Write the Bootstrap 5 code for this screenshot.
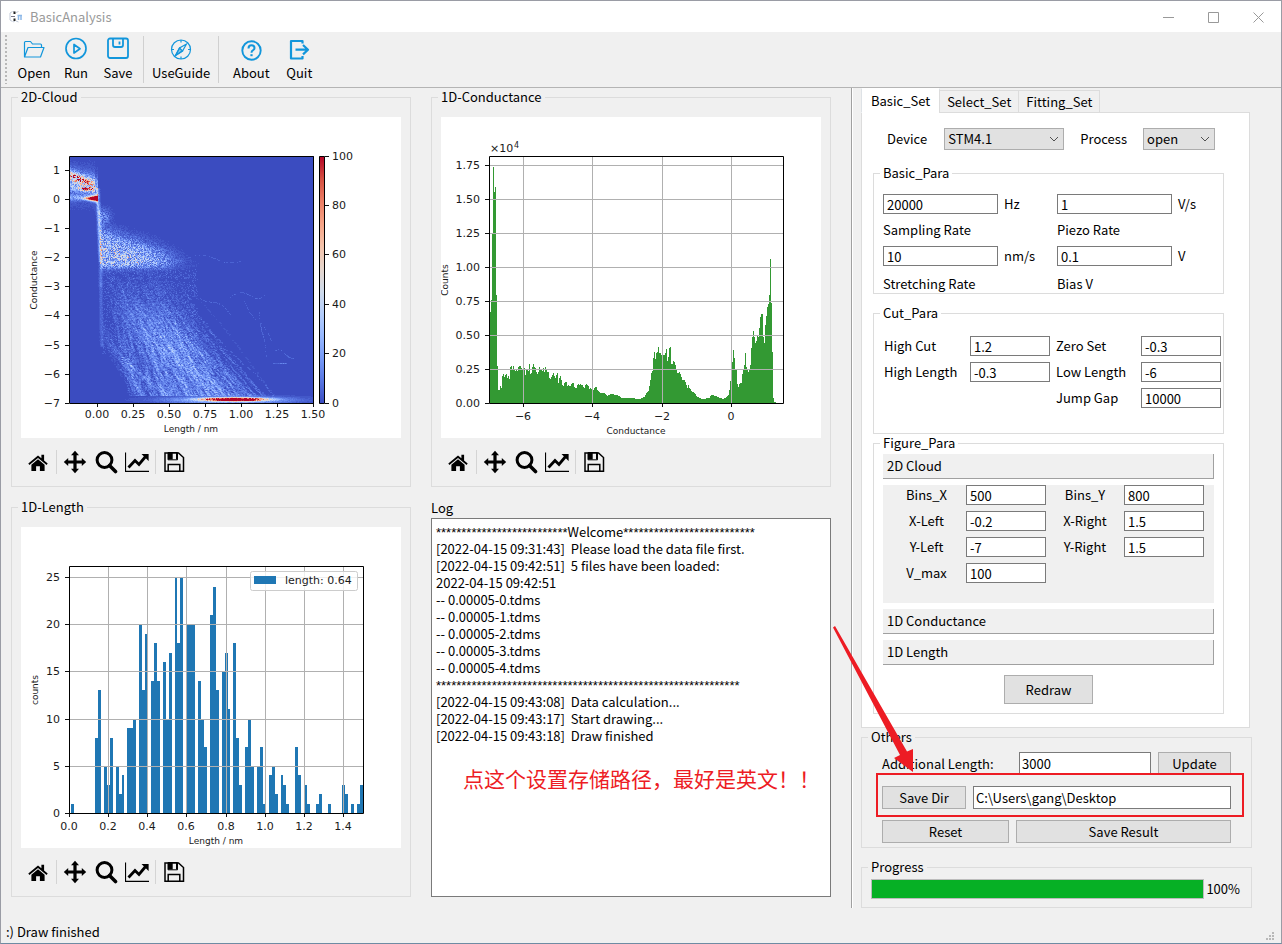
<!DOCTYPE html>
<html lang="en">
<head>
<meta charset="utf-8">
<meta name="viewport" content="width=device-width, initial-scale=1">
<title>BasicAnalysis</title>
<link rel="stylesheet" href="https://cdn.jsdelivr.net/npm/bootstrap@5.3.0/dist/css/bootstrap.min.css">
<style>
  body { font-family: "Noto Sans CJK SC", "Noto Sans", sans-serif; font-size: 13px; line-height: 18px; color: #000; background: #f0f0f0; }
  .app-window { min-height: 100vh; border: 1px solid #9a9ca5; border-bottom-color: #6e8ba3; background: #f0f0f0; }
  .title-bar { height: 31px; background: #fff; color: #999; }
  .win-btn { width: 45px; height: 30px; border: 0; background: none; color: #999; }
  .tool-bar { height: 56px; border-bottom: 1px solid #b4b4b4; }
  .handle { width: 2px; height: 49px; margin-right: 2px; background: repeating-linear-gradient(#b8b8b8 0 2px, transparent 2px 4px); }
  .tool-btn { min-width: 42px; border: 0; background: none; padding: 0; display: flex; flex-direction: column; align-items: center; gap: 3px; color: #000; line-height: 18px; }
  .tool-btn svg { color: #1296db; }
  .tool-pair { gap: 6px; padding-left: 11px; }
  .rule { width: 1px; height: 47px; background: #d0d0d0; }
  .rule-sm { width: 1px; height: 24px; margin: 0 -1px; background: #d4d4d4; }

  .group-box { border: 1px solid #dcdcdc; padding: 0 9px; }
  .group-box > legend { float: none; width: auto; margin: 0 0 0 -3px; padding: 0 3px; font-size: 13px; line-height: 18px; }
  .work-area { padding: 0 20px 0 10px; }
  .plots { display: grid; grid-template-columns: minmax(0, 1fr) minmax(0, 1fr); gap: 11px 20px; }
  .figure-box { padding-top: 11px; }
  .figure-box svg.fig { display: block; width: 100%; height: auto; background: #fff; }
  .fig text { font-family: "DejaVu Sans", sans-serif; font-size: 11px; fill: #1a1a1a; }
  .fig .axis-name { font-size: 9px; }
  .fig .exponent { font-size: 8px; }
  .fig-tools { height: 48px; padding-left: 5px; gap: 7px; }
  .fig-tools button { border: 0; padding: 0; background: none; width: 24px; height: 24px; line-height: 0; color: #000; }

  .log-title { line-height: 20px; }
  .log-box { background: #fff; border: 1px solid #7a7a7a; padding: 4px; line-height: 17px; white-space: pre-wrap; }
  .stars { font-family: "Liberation Sans", sans-serif; line-height: 1; }
  .note { position: absolute; left: 31px; top: 244px; font-size: 21px; line-height: 30px; color: #ed1c24; white-space: nowrap; pointer-events: none; }

  .side { flex: 0 0 430px; border-left: 1px solid #a0a0a0; padding: 0 29px 0 9px; box-shadow: inset 1px 0 #fff; }
  .set-tabs { border: 0; align-items: flex-end; height: 24px; }
  .set-tabs .nav-link { border: 1px solid #dcdcdc; border-radius: 0; background: #f0f0f0; color: #000; padding: 2px 7px 1px; height: 23px; margin-bottom: -1px; margin-left: -1px; line-height: 18px; }
  .set-tabs .nav-link.active { background: #fff; color: #000; height: 25px; border-bottom-color: #fff; border-top-color: #fff; padding: 3px 9px 2px; margin-left: 0; }
  .set-tabs .nav-link:hover, .set-tabs .nav-link:focus { border-color: #dcdcdc; }
  .set-pane { background: #fff; border: 1px solid #dcdcdc; margin-right: 2px; padding: 15px 25px 13px 11px; }
  .field { height: 20px; border: 1px solid #7a7a7a; border-radius: 0; padding: 0 3px; font-size: 13px; line-height: 18px; color: #000; background: #fff; min-width: 0; }
  .field-tall { height: 23px; padding: 0 2px; }
  .pick { height: 22px; border: 1px solid #adadad; border-radius: 0; padding: 0 20px 0 3px; font-size: 13px; line-height: 20px; color: #000; background-color: #e1e1e1; background-position: right 4px center; background-size: 10px 10px;
    background-image: url("data:image/svg+xml,%3csvg xmlns='http://www.w3.org/2000/svg' viewBox='0 0 10 10'%3e%3cpath fill='none' stroke='%23505050' d='M1 3l4 4 4-4'/%3e%3c/svg%3e"); }
  .pick-device { width: 120px; }
  .pick-process { width: 72px; }
  .push { height: 23px; border: 1px solid #adadad; border-radius: 0; background: #e1e1e1; color: #000; padding: 0 6px; font-size: 13px; line-height: 20px; }
  .push-redraw { width: 89px; height: 29px; margin: 4px 0 9px; }
  .device-row { padding: 0 9px 0 14px; height: 22px; margin-bottom: 14px; }
  .basic-grid { display: grid; grid-template-columns: 115px 47px 115px 1fr; grid-template-rows: 20px 32px 20px 27px; column-gap: 6px; align-items: center; padding-top: 12px; }
  .basic-grid .last-label { align-self: end; }
  .cut-group { margin-top: 10px; padding-right: 0; }
  .cut-grid { display: grid; grid-template-columns: 80px 80px 79px 80px; gap: 6px; align-items: center; padding: 14px 0 25px 1px; }
  .folds { padding-top: 2px; }
  .cloud-grid { display: grid; grid-template-columns: 77px 80px 66px 80px; gap: 6px; align-items: center; text-align: center; background: #f0f0f0; padding-bottom: 20px; margin: 6px 0; }
  .cloud-grid label:nth-of-type(odd) { padding-left: 10px; }
  .fold { height: 25px; border: 0; border-right: 1px solid #a0a0a0; border-bottom: 1px solid #a0a0a0; background: #f0f0f0; text-align: left; padding: 0 4px; color: #000; }
  .fold-closed { margin-bottom: 6px; }
  .others { padding: 6px 20px 4px; }
  .others > legend { margin-left: -14px; }
  .others-rows { row-gap: 11px; }
  .others-row { gap: 7px; }
  .len-field { width: 132px; }
  .btn-update { width: 73px; }
  .btn-dir { width: 84px; }
  .btn-reset { width: 127px; }
  .progress-group { margin-top: 10px; padding: 3px 9px 8px; }
  .done { height: 20px; border: 1px solid #bcbcbc; border-radius: 0; background: #e6e6e6; }
  .done .progress-bar { background: #06b025; }
  .percent { padding: 0 2px; }
  .highlight { position: absolute; left: -6px; right: -13px; top: -13px; bottom: -8px; border: 2px solid #ed1c24; pointer-events: none; }
  .pointer { position: absolute; left: -49px; top: -160px; pointer-events: none; }
  .status-bar { height: 22px; padding: 0 5px; }
</style>
</head>
<body>
<svg class="d-none" aria-hidden="true">
  <symbol id="i-home" viewBox="0 0 24 24"><path d="M12 5.500L2.300 13.600l1.100 1.300L12 7.900l8.600 7 1.100-1.300-3.600-3V4.700h-2.700v3.600z"/><path d="M12 9.300l-6.600 5.400V21h4.700v-4.800h3.800V21h4.700v-6.300z"/></symbol>
  <symbol id="i-pan" viewBox="0 0 24 24"><path d="M12 .800l4 4.400h-2.400v5.200h5.200V8l4.400 4-4.400 4v-2.400h-5.200v5.200H16l-4 4.400-4-4.400h2.400v-5.200H5.200V16L.800 12l4.400-4v2.400h5.200V5.200H8z"/></symbol>
  <symbol id="i-zoom" viewBox="0 0 24 24"><circle cx="10.500" cy="10" r="7.400" fill="none" stroke="currentColor" stroke-width="3"/><path d="M15.500 15.500l6 6" stroke="currentColor" stroke-width="3.600" stroke-linecap="round"/></symbol>
  <symbol id="i-axes" viewBox="0 0 24 24"><path d="M.500 2.500v18.800H24" fill="none" stroke="currentColor" stroke-width="1.200"/><path d="M3.500 17.500l6.500-7 4 4 7-8.500" fill="none" stroke="currentColor" stroke-width="2.800"/><path d="M16.500 4H23.600v7z"/></symbol>
  <symbol id="i-disk" viewBox="0 0 24 24"><path d="M3 3h13.500l5 4.500V21.300H3zM6.200 21v-6.600h11.600V21" fill="none" stroke="currentColor" stroke-width="1.500"/><path d="M6 2.500h9.500v7.300H6z" fill="none" stroke="currentColor"/><path d="M6 3h4.700v6.500H6zM14 3h1.500v6.500H14z"/></symbol>
</svg>

<div class="app-window d-flex flex-column">
  <header class="title-bar d-flex align-items-center">
    <svg width="13" height="13" viewBox="0 0 13 13" class="ms-2 me-2" fill="none" aria-hidden="true"><path d="M3.500 1.500L1 3v7l2.500 1.500M6 2.500l-2-1M7 2.500l2.500-1M6 11l-2 1M7 11l2.500 1" stroke="#c3cbd9"/><path d="M5.500 1.500v2.500M5.500 8.500v2.500" stroke="#222" stroke-width="2"/><path d="M2 6.500h4" stroke="#778"/><path d="M8.500 5.500H13M9.500 6v4M12 6v4" stroke="#8db8e8" stroke-width="1.500"/></svg>
    <span class="me-auto">BasicAnalysis</span>
    <button class="win-btn" aria-label="Minimize"><svg width="11" height="11"><path d="M0 5.500h11" stroke="currentColor"/></svg></button>
    <button class="win-btn" aria-label="Maximize"><svg width="11" height="11"><path d="M.500 .500h10v10H.500z" fill="none" stroke="currentColor"/></svg></button>
    <button class="win-btn" aria-label="Close"><svg width="11" height="11"><path d="M.500 .500l10 10M10.500 .500l-10 10" stroke="currentColor"/></svg></button>
  </header>

  <nav class="tool-bar d-flex align-items-center" aria-label="Main">
    <div class="handle ms-1"></div>
    <div class="d-flex ps-1">
      <button class="tool-btn"><svg width="24" height="24" viewBox="0 0 24 24" fill="none" stroke="currentColor" stroke-width="1.200" stroke-linejoin="round"><path d="M2.500 20V5.500q0-1 1-1h5l2 2.500h8q1 0 1 1v2.500M2.500 20L6 10.500h16L18.500 20z"/></svg>Open</button>
      <button class="tool-btn"><svg width="24" height="24" viewBox="0 0 24 24" fill="none" stroke="currentColor" stroke-width="1.700" stroke-linejoin="round"><circle cx="12" cy="11.500" r="10"/><path d="M10 7.500v8.500l6-4.200z"/></svg>Run</button>
      <button class="tool-btn"><svg width="24" height="24" viewBox="0 0 24 24" fill="none" stroke="currentColor" stroke-width="1.800" stroke-linejoin="round"><rect x="2" y="1.500" width="20" height="19.500" rx="2"/><path d="M7 1.500v6.500q0 2 2 2h6q2 0 2-2V1.500M13.500 4.500v3"/></svg>Save</button>
    </div>
    <div class="rule ms-1 me-1"></div>
    <button class="tool-btn mx-1"><svg width="24" height="24" viewBox="0 0 24 24" fill="none" stroke="currentColor" stroke-width="1.200"><circle cx="12" cy="12.500" r="9.500"/><path d="M12 3v2.500M12 19.500V22M2.500 12.500H5M19 12.500h2.500"/><path d="M17.500 7l-4 7-7 4.500 4-7.500z"/><path d="M10.500 11l3 3-7 4.500z" fill="currentColor" fill-opacity=".5"/></svg>UseGuide</button>
    <div class="rule ms-1"></div>
    <div class="d-flex tool-pair">
      <button class="tool-btn"><svg width="24" height="24" viewBox="0 0 24 24" fill="none" stroke="currentColor" stroke-width="1.900"><circle cx="12.500" cy="13.500" r="9.200"/><path d="M9.500 11.500q0-3.200 3-3.200t3 2.700q0 1.500-1.600 2.300-1.400.700-1.400 2.400" stroke-width="2"/><path d="M12.500 17.200v2" stroke-width="2.200"/></svg>About</button>
      <button class="tool-btn"><svg width="24" height="24" viewBox="0 0 24 24" fill="none" stroke="currentColor" stroke-width="2.200" stroke-linejoin="round"><path d="M15.500 6.500V4H4v17.500h11.500V19M8.500 12.700h12M16 8l5 4.700-5 4.700"/></svg>Quit</button>
    </div>
  </nav>

  <div class="d-flex flex-grow-1 align-items-start">
    <main class="work-area flex-grow-1">
      <div class="plots">
        <fieldset class="group-box figure-box">
          <legend>2D-Cloud</legend>
          <svg class="fig" id="cloud" viewBox="0 0 380 321" role="img" aria-label="2D cloud of conductance against length"></svg>
          <div class="fig-tools d-flex align-items-center"></div>
        </fieldset>
        <fieldset class="group-box figure-box">
          <legend>1D-Conductance</legend>
          <svg class="fig" id="conductance" viewBox="0 0 380 321" role="img" aria-label="Histogram of conductance"></svg>
          <div class="fig-tools d-flex align-items-center"></div>
        </fieldset>
        <fieldset class="group-box figure-box">
          <legend>1D-Length</legend>
          <svg class="fig" id="length" viewBox="0 0 380 321" role="img" aria-label="Histogram of length"></svg>
          <div class="fig-tools d-flex align-items-center"></div>
        </fieldset>
        <section class="d-flex flex-column">
          <div class="log-title" id="log-title">Log</div>
          <div class="log-box flex-grow-1 position-relative" role="log" aria-labelledby="log-title"><span class="stars">**************************</span>Welcome<span class="stars">**************************</span>
[2022-04-15 09:31:43]  Please load the data file first.
[2022-04-15 09:42:51]  5 files have been loaded:
2022-04-15 09:42:51
-- 0.00005-0.tdms
-- 0.00005-1.tdms
-- 0.00005-2.tdms
-- 0.00005-3.tdms
-- 0.00005-4.tdms
<span class="stars">************************************************************</span>
[2022-04-15 09:43:08]  Data calculation...
[2022-04-15 09:43:17]  Start drawing...
[2022-04-15 09:43:18]  Draw finished<div class="note" lang="zh-CN">点这个设置存储路径，最好是英文！！</div></div>
        </section>
      </div>
    </main>

    <aside class="side">
      <div class="nav nav-tabs set-tabs" role="tablist">
        <button class="nav-link active" role="tab" aria-selected="true">Basic_Set</button>
        <button class="nav-link" role="tab" aria-selected="false">Select_Set</button>
        <button class="nav-link" role="tab" aria-selected="false">Fitting_Set</button>
      </div>
      <div class="set-pane" role="tabpanel">
        <div class="device-row d-flex align-items-center">
          <label for="device" class="me-auto">Device</label>
          <select id="device" class="form-select pick pick-device me-3"><option>STM4.1</option></select>
          <label for="process" class="me-3">Process</label>
          <select id="process" class="form-select pick pick-process"><option>open</option></select>
        </div>

        <fieldset class="group-box">
          <legend>Basic_Para</legend>
          <div class="basic-grid">
            <input id="sampling" class="field" value="20000"><span>Hz</span>
            <input id="piezo" class="field" value="1"><span>V/s</span>
            <label for="sampling">Sampling Rate</label><span></span>
            <label for="piezo">Piezo Rate</label><span></span>
            <input id="stretch" class="field" value="10"><span>nm/s</span>
            <input id="bias" class="field" value="0.1"><span>V</span>
            <label for="stretch" class="last-label">Stretching Rate</label><span></span>
            <label for="bias" class="last-label">Bias V</label><span></span>
          </div>
        </fieldset>

        <fieldset class="group-box cut-group">
          <legend>Cut_Para</legend>
          <div class="cut-grid">
            <label for="hcut">High Cut</label><input id="hcut" class="field" value="1.2">
            <label for="zero">Zero Set</label><input id="zero" class="field" value="-0.3">
            <label for="hlen">High Length</label><input id="hlen" class="field" value="-0.3">
            <label for="llen">Low Length</label><input id="llen" class="field" value="-6">
            <span></span><span></span>
            <label for="gap">Jump Gap</label><input id="gap" class="field" value="10000">
          </div>
        </fieldset>

        <fieldset class="group-box">
          <legend>Figure_Para</legend>
          <div class="d-flex flex-column folds">
            <button class="fold" aria-expanded="true">2D Cloud</button>
            <div class="cloud-grid">
              <label for="binsx">Bins_X</label><input id="binsx" class="field" value="500">
              <label for="binsy">Bins_Y</label><input id="binsy" class="field" value="800">
              <label for="xl">X-Left</label><input id="xl" class="field" value="-0.2">
              <label for="xr">X-Right</label><input id="xr" class="field" value="1.5">
              <label for="yl">Y-Left</label><input id="yl" class="field" value="-7">
              <label for="yr">Y-Right</label><input id="yr" class="field" value="1.5">
              <label for="vmax">V_max</label><input id="vmax" class="field" value="100">
            </div>
            <button class="fold fold-closed" aria-expanded="false">1D Conductance</button>
            <button class="fold fold-closed" aria-expanded="false">1D Length</button>
            <button class="push push-redraw align-self-center">Redraw</button>
          </div>
        </fieldset>
      </div>

      <fieldset class="group-box others">
        <legend>Others</legend>
        <div class="others-rows d-grid">
          <div class="d-flex align-items-center others-row">
            <label for="addlen" class="me-auto">Additional Length:</label>
            <input id="addlen" class="field field-tall len-field" value="3000">
            <button class="push btn-update">Update</button>
          </div>
          <div class="d-flex others-row position-relative">
            <button class="push btn-dir">Save Dir</button>
            <input class="field field-tall flex-grow-1" aria-label="Save Dir" value="C:\Users\gang\Desktop">
            <div class="highlight"></div>
            <svg class="pointer" width="82" height="147" viewBox="833 626 82 147" aria-hidden="true"><path fill="#ed1c24" d="M833 627.500L835 626l72 125.500 6-2.500v23l-19-14 6-3z"/></svg>
          </div>
          <div class="d-flex others-row">
            <button class="push btn-reset">Reset</button>
            <button class="push flex-grow-1">Save Result</button>
          </div>
        </div>
      </fieldset>

      <fieldset class="group-box progress-group">
        <legend>Progress</legend>
        <div class="d-flex align-items-center">
          <div class="progress done flex-grow-1" role="progressbar" aria-label="Progress" aria-valuenow="100" aria-valuemin="0" aria-valuemax="100"><div class="progress-bar" style="width:100%"></div></div>
          <span class="percent">100%</span>
        </div>
      </fieldset>
    </aside>
  </div>

  <footer class="status-bar d-flex align-items-center justify-content-between">
    <span>:) Draw finished</span>
    <svg width="12" height="12" viewBox="0 0 12 12" class="align-self-end" fill="#b8b8b8" aria-hidden="true"><path d="M8 1h2v2H8zM8 4h2v2H8zM5 4h2v2H5zM8 7h2v2H8zM5 7h2v2H5zM2 7h2v2H2z"/></svg>
  </footer>
</div>

<script>
(function () {
  // Toolbar below every figure
  var tool = function (id, name) {
    return '<button aria-label="' + name + '"><svg width="24" height="24" fill="currentColor"><use href="#i-' + id + '"/></svg></button>';
  };
  document.querySelectorAll('.fig-tools').forEach(function (bar) {
    bar.innerHTML = tool('home', 'Home') + '<span class="rule-sm"></span>' + tool('pan', 'Pan') +
      tool('zoom', 'Zoom') + tool('axes', 'Edit axes') + '<span class="rule-sm"></span>' + tool('disk', 'Save figure');
  });

  var seed = 20220415;
  function rnd() { seed = (seed * 1664525 + 1013904223) % 4294967296; return seed / 4294967296; }
  function gauss() { return (rnd() + rnd() + rnd() + rnd() - 2) * 1.7; }
  function text(x, y, s, anchor, cls) {
    return '<text x="' + x + '" y="' + y + '" text-anchor="' + anchor + '"' + (cls ? ' class="' + cls + '"' : '') + '>' + s + '</text>';
  }
  function sideText(x, y, s) {
    return '<text class="axis-name" text-anchor="middle" transform="translate(' + x + ' ' + y + ') rotate(-90)">' + s + '</text>';
  }
  function ticks(xs, ys, left, bottom, grid) {
    var g = '', t = '';
    xs.forEach(function (a) {
      if (grid) g += 'M' + (a[0] + .5) + ' 39.500V286';
      t += 'M' + (a[0] + .5) + ' 286v4';
    });
    ys.forEach(function (a) {
      if (grid) g += 'M' + left + ' ' + (a[0] + .5) + 'H342';
      t += 'M' + left + ' ' + (a[0] + .5) + 'h-4';
    });
    return '<path d="' + g + '" stroke="#b0b0b0" fill="none"/><path d="' + t + '" stroke="#111" fill="none"/>' +
      xs.map(function (a) { return text(a[0], bottom, a[1], 'middle'); }).join('') +
      ys.map(function (a) { return text(left - 9, a[0] + 4, a[1], 'end'); }).join('');
  }

  // 1D conductance: [column, height] knots, filled in between
  var knots = [0,91,1,103,2,170,3,236,4,211,5,216,6,108,7,37,8,13,9,13,10,17,11,15,12,27,13,29,14,26,15,28,18,27,19,24,20,36,21,37,25,32,28,36,29,37,32,33,33,38,
    35,28,36,34,38,32,39,39,40,29,42,36,43,39,45,35,47,29,49,36,52,32,56,34,58,31,59,25,61,26,63,30,65,25,67,30,68,20,70,27,72,18,74,20,79,17,82,20,86,15,90,19,94,15,97,18,100,15,105,16,107,13,110,10,114,10,
    117,7,120,9,127,8,131,5,140,5,149,4,154,6,156,10,158,12,159,17,160,23,161,30,162,32,163,45,164,51,165,44,166,50,168,56,169,50,170,50,172,45,174,48,176,54,177,42,178,46,179,55,180,56,181,39,184,41,187,30,190,29,
    193,23,196,18,199,15,201,12,204,10,207,6,212,4,219,5,221,8,226,7,229,5,233,4,236,6,238,8,239,13,240,22,241,22,242,41,243,53,244,45,245,34,246,33,247,19,248,16,249,19,251,20,252,29,253,33,254,38,255,50,256,36,257,33,259,33,
    260,38,261,55,262,66,263,72,264,66,265,60,266,62,267,68,268,66,269,75,270,86,271,89,272,89,273,66,274,60,275,78,276,87,277,96,278,99,279,108,280,144,281,100,282,51,283,5,284,1,286,0];
  var d = '', x, k = 0, h;
  for (x = 0; x < 286; x++) {
    while (knots[k + 2] <= x) k += 2;
    h = knots[k + 1] + (knots[k + 3] - knots[k + 1]) * (x - knots[k]) / (knots[k + 2] - knots[k]);
    if (knots[k] !== x && h > 12) h += (rnd() - .5) * 5;
    h = Math.round(h);
    if (h > 0) d += 'M' + (49 + x) + ' 286v-' + h + 'h1v' + h + 'z';
  }
  document.getElementById('conductance').innerHTML = '<path d="' + d + '" fill="#339933" shape-rendering="crispEdges"/>' +
    ticks([[82, '−6'], [151, '−4'], [221, '−2'], [290, '0']],
      [[48, '1.75'], [82, '1.50'], [116, '1.25'], [150, '1.00'], [184, '0.75'], [218, '0.50'], [252, '0.25'], [286, '0.00']], 48, 303, true) +
    '<path d="M48.500 39.500H342.500V286.500H48.500z" fill="none" stroke="#000"/>' + text(49, 35, '×10', 'start') + text(73, 31, '4', 'start', 'exponent') +
    text(195, 317, 'Conductance', 'middle', 'axis-name') + sideText(7, 163, 'Counts');

  // 1D length: [left, right, count]
  var bars = [50,53,1,74,77,8,77,80,13,83,86,5,86,89,3,89,92,8,95,98,5,98,101,2,101,103,4,106,112,9,112,115,10,118,121,20,121,124,13,124,126,19,130,133,14,133,136,18,136,139,14,
    142,145,16,145,148,10,148,151,17,154,156,25,156,159,18,159,162,25,166,174,20,177,180,14,180,183,10,183,186,7,189,192,21,192,195,24,195,198,13,201,204,15,204,207,17,207,209,11,212,215,18,215,218,8,218,221,3,
    224,227,7,227,230,10,230,233,5,236,239,5,239,242,7,242,244,1,248,251,4,251,254,5,254,257,2,260,262,4,262,265,3,265,268,1,274,277,7,277,280,4,283,286,3,286,289,1,295,298,1,298,301,2,307,310,1,321,324,3,324,327,2,330,333,1,336,339,1,339,342,3];
  d = '';
  for (k = 0; k < bars.length; k += 3) {
    h = Math.round(bars[k + 2] * 9.43);
    d += 'M' + bars[k] + ' 286V' + (286 - h) + 'H' + bars[k + 1] + 'V286z';
  }
  document.getElementById('length').innerHTML = '<path d="' + d + '" fill="#1f77b4" shape-rendering="crispEdges"/>' +
    ticks([[48, '0.0'], [87, '0.2'], [126, '0.4'], [165, '0.6'], [205, '0.8'], [244, '1.0'], [283, '1.2'], [322, '1.4']],
      [[50, '25'], [97, '20'], [144, '15'], [192, '10'], [239, '5'], [286, '0']], 48, 303, true) +
    '<path d="M48.500 39.500H342.500V286.500H48.500z" fill="none" stroke="#000"/>' +
    '<rect x="229.500" y="44.500" width="107" height="19" rx="2" fill="#fff" fill-opacity=".8" stroke="#ccc"/><path d="M233 49h22v8h-22z" fill="#1f77b4"/>' +
    text(264, 57, 'length: 0.64', 'start') + text(195, 317, 'Length / nm', 'middle', 'axis-name') + sideText(17, 163, 'counts');

  // 2D cloud: count map, one path per colour level
  var W = 244, H = 247, v = new Float32Array(W * H), i, j, y, n;
  function add(px, py, a) { px = Math.round(px); py = Math.round(py); if (px >= 0 && px < W && py >= 0 && py < H) v[py * W + px] += a; }
  function g(a, s) { return Math.exp(-a * a / (2 * s * s)); }
  for (y = 0; y < H; y++) for (x = 0; x < W; x++) {
    var e = 0, r = rnd();
    if (x < 28) {
      e += 36 * g(y - 18 - x * .35, 4.500) + 24 * g(y - 29 - x * .15, 3) + 7 * g(y - 28, 12);
      e += 52 * g(y - 19 - x * .32, 2.500) * g(x - 7, 8) + 55 * g(y - 31.500, 1.200) * g(x - 17, 5);
      e *= .3 + 1.300 * r;
      e += 20 * g(y - 40, 2) * (.4 + r) + 150 * g(y - 41, Math.max(.8, 2 - (27 - x) * .08)) * g(x - 26, 7);
      if (x > 24) e *= y < 36 ? .45 : 1;
    }
    var cx = y < 105 ? 27 + (y - 30) * .045 : 30.400 + Math.pow(Math.max(0, y - 105) / 80, 3);
    if (y > 30 && y < 190) e += (y < 105 ? 32 : y < 130 ? 12 : 7) * g(x - cx, 1.200) * (.6 + .7 * r) * (y < 45 ? .7 : 1);
    if (x > 28) e += 18 * g(x - 33, 4.500) * g(y - 59, 5) * r * 1.500;
    if (x > 29 && x < 135) {
      var top = 75 + (x - 30) * .3, fade = 1 / (1 + Math.exp((x - 95) / 10));
      var band = 1 / (1 + Math.exp((top - y) / 4)) / (1 + Math.exp((y - 110) / 1.600));
      e += 34 * band * fade * (.15 + 1.600 * r * (rnd() < .75 ? 1 : .4));
      if (rnd() < .04) e += 24 * band * fade;
    }
    if (x > 45) e += Math.max(155 * g(x - 163, 24) * g(y - 242, 1.400), 42 * g(x - 158, 38) * g(y - 242.500, 2.200)) * (.75 + .5 * r);
    v[y * W + x] += e;
  }
  for (n = 0; n < 400; n++) {
    var y0 = 112 + rnd() * 45, x0 = 34 + rnd() * 75, xf = 134 + gauss() * 38, p = .85 + rnd() * .35, off = 0, amp = 1.500 + rnd() * 3.500;
    if (n < 40) { xf = 62 + rnd() * 50; y0 = 165 + rnd() * 25; x0 = 33; p = 1; }
    if (xf < 60 || xf > 208) continue;
    x0 = Math.min(x0, xf * .62);
    for (y = Math.round(y0); y < 239; y++) {
      off += (rnd() - .5) * 1.400;
      var f = (y - y0) / (244 - y0), sx = x0 + (xf - x0) * Math.pow(f, p) + off, a = amp * Math.min(1, .3 + f * 1.500);
      if (rnd() < .4 + .35 * f) { add(sx, y, a); if (rnd() < .6) add(sx + 1, y, a); }
    }
  }
  for (n = 0; n < 2200; n++) add(32 + rnd() * 95, 112 + rnd() * 85, 4);
  [[118, 100, 170, 103, -3], [160, 140, 196, 136, -4], [170, 134, 203, 190, 5], [120, 130, 160, 158, 4], [205, 193, 224, 200, -2], [203, 206, 216, 206, 0], [188, 150, 196, 200, 4]].forEach(function (c) {
    for (n = 0; n <= 60; n++) { f = n / 60; if (rnd() < .5) add(c[0] + (c[2] - c[0]) * f, c[1] + (c[3] - c[1]) * f + c[4] * Math.sin(f * 6), 4); }
  });
  var stops = [[59,76,192],[88,118,226],[119,154,247],[151,184,255],[180,205,251],[207,218,234],[230,214,205],[244,195,171],[246,164,135],[235,126,101],[213,80,66],[180,4,38]];
  function colour(t) {
    t = Math.max(0, Math.min(1, t)) * 11; i = Math.min(10, Math.floor(t)); t -= i;
    return 'rgb(' + stops[i].map(function (c, q) { return Math.round(c + (stops[i + 1][q] - c) * t); }).join() + ')';
  }
  var levels = [];
  for (y = 0; y < H; y++) for (x = 0; x < W; x++) {
    j = Math.min(40, Math.round(v[y * W + x] * .4));
    if (j > 0) levels[j] = (levels[j] || '') + 'M' + (49 + x) + ' ' + (40 + y) + 'h1v1h-1z';
  }
  d = '<defs><linearGradient id="coolwarm" x1="0" y1="1" x2="0" y2="0">' + stops.map(function (s, q) { return '<stop offset="' + q / 11 + '" stop-color="rgb(' + s + ')"/>'; }).join('') + '</linearGradient></defs>' +
    '<path d="M49 39H293V286H49z" fill="#3b4cc0"/><g shape-rendering="crispEdges">';
  levels.forEach(function (s, q) { d += '<path fill="' + colour(q / 40) + '" d="' + s + '"/>'; });
  d += '</g><path d="M298.500 39.500h5v247h-5z" fill="url(#coolwarm)" stroke="#000"/>';
  d += ticks([[76, '0.00'], [112, '0.25'], [148, '0.50'], [184, '0.75'], [220, '1.00'], [256, '1.25'], [292, '1.50']],
    [[53, '1'], [82, '0'], [111, '−1'], [140, '−2'], [169, '−3'], [198, '−4'], [228, '−5'], [257, '−6'], [286, '−7']], 48, 301, false);
  [[39, '100'], [88, '80'], [137, '60'], [187, '40'], [236, '20'], [286, '0']].forEach(function (a) {
    d += '<path d="M304 ' + (a[0] + .5) + 'h4" stroke="#111"/>' + text(311, a[0] + 4, a[1], 'start');
  });
  document.getElementById('cloud').innerHTML = d + '<path d="M48.500 39.500H292.500V286.500H48.500z" fill="none" stroke="#000"/>' +
    text(170, 315, 'Length / nm', 'middle', 'axis-name') + sideText(16, 163, 'Conductance');
})();
</script>
<script src="https://cdn.jsdelivr.net/npm/bootstrap@5.3.0/dist/js/bootstrap.bundle.min.js"></script>
</body>
</html>
